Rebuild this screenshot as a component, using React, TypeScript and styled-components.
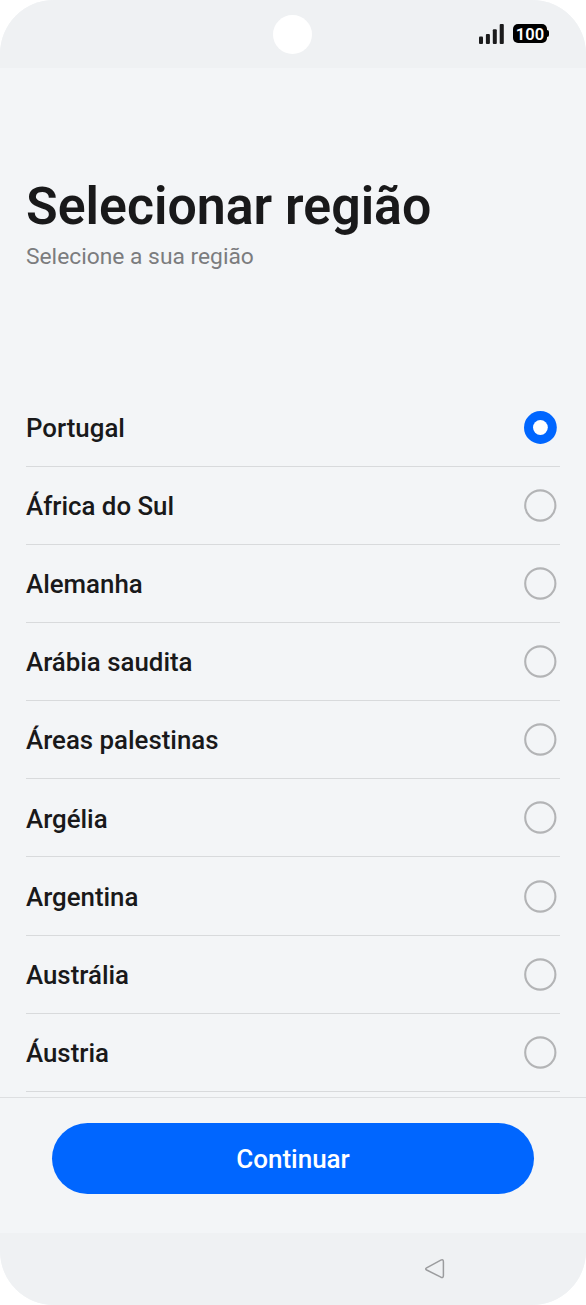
import React, { useState } from "react";
import styled, { createGlobalStyle } from "styled-components";

const GlobalStyle = createGlobalStyle`
  *, *::before, *::after { box-sizing: border-box; }
  body { margin: 0; background: #ffffff; font-family: Roboto, "Liberation Sans", sans-serif; }
`;

const Phone = styled.main`
  display: flex;
  flex-direction: column;
  width: 586px;
  height: 1305px;
  border-radius: 54px;
  overflow: hidden;
  background: #f3f5f7;
  color: #19191a;
`;

const StatusBar = styled.header`
  display: grid;
  grid-template-columns: 1fr 40px 1fr;
  align-items: center;
  flex: none;
  height: 68px;
  padding: 0 37px 0 36px;
  background: #eff1f3;
`;

const Camera = styled.span`
  grid-column: 2;
  width: 39px;
  height: 39px;
  border-radius: 50%;
  background: #ffffff;
`;

const StatusIcons = styled.div`
  display: flex;
  align-items: center;
  justify-content: flex-end;
  gap: 9px;
  padding-bottom: 1px;
`;

const SignalIcon = styled.svg`
  display: block;
  width: 25px;
  height: 20px;
  fill: #1b1b1c;
`;

const Battery = styled.div`
  display: flex;
  align-items: center;
`;

const BatteryBody = styled.span`
  width: 34px;
  height: 19px;
  border-radius: 5px;
  background: #000000;
  color: #ffffff;
  font-size: 16.5px;
  font-weight: 600;
  line-height: 21px;
  text-align: center;
`;

const BatteryTip = styled.span`
  width: 2px;
  height: 7px;
  border-radius: 0 2px 2px 0;
  background: #000000;
`;

const Heading = styled.section`
  flex: none;
  height: 320.7px;
  padding: 108px 26px 0;
`;

const Title = styled.h1`
  margin: 0;
  font-size: 51.85px;
  font-weight: 600;
  line-height: 62px;
  white-space: nowrap;
`;

const Subtitle = styled.p`
  margin: 4px 0 0;
  color: #7b7c7e;
  font-size: 22.8px;
  line-height: 30px;
`;

const RegionList = styled.div`
  flex: 1;
  min-height: 0;
  padding: 0 26px;
  overflow: hidden;
`;

const RegionRow = styled.button`
  display: flex;
  align-items: center;
  justify-content: space-between;
  width: 100%;
  height: 78.125px;
  padding: 0 3px 0 0;
  border: 0;
  border-bottom: 1px solid #d8dadc;
  background: none;
  color: inherit;
  font-family: inherit;
  font-size: 25.85px;
  font-weight: 500;
  line-height: 32px;
  text-align: left;
`;

const RegionName = styled.span`
  padding-top: 1.4px;
`;

const RadioIcon = styled.svg`
  display: block;
  width: 33px;
  height: 33px;
`;

const Footer = styled.footer`
  flex: none;
  height: 136px;
  padding: 25px 52px 0;
  border-top: 1px solid #dddfe1;
`;

const ContinueButton = styled.button`
  display: block;
  width: 100%;
  height: 71px;
  padding: 0;
  border: 0;
  border-radius: 36px;
  background: #0066ff;
  color: #ffffff;
  font-family: inherit;
  font-size: 26px;
  font-weight: 500;
  line-height: 73px;
`;

const NavBar = styled.nav`
  display: flex;
  flex: none;
  align-items: center;
  justify-content: flex-end;
  height: 72px;
  padding-right: 140px;
  background: #eff1f3;
`;

const BackIcon = styled.svg`
  display: block;
  width: 22px;
  height: 22px;
  fill: none;
  stroke: #9b9c9e;
  stroke-width: 1.5;
  stroke-linejoin: round;
`;

const regions = [
  "Portugal",
  "África do Sul",
  "Alemanha",
  "Arábia saudita",
  "Áreas palestinas",
  "Argélia",
  "Argentina",
  "Austrália",
  "Áustria",
];

function Radio({ checked }: { checked: boolean }) {
  return (
    <RadioIcon viewBox="0 0 33 33">
      {checked ? (
        <>
          <circle cx="16.4" cy="16.5" r="16.4" fill="#0066ff" />
          <circle cx="16.4" cy="16.5" r="7.4" fill="#ffffff" />
        </>
      ) : (
        <circle cx="16.3" cy="16.5" r="15.1" fill="none" stroke="#b3b4b6" strokeWidth="2.1" />
      )}
    </RadioIcon>
  );
}

export default function App() {
  const [selected, setSelected] = useState("Portugal");

  return (
    <>
      <GlobalStyle />
      <Phone>
        <StatusBar>
          <Camera />
          <StatusIcons>
            <SignalIcon viewBox="0 0 25 20">
              <rect x="0" y="12.4" width="4" height="7.6" rx="1" />
              <rect x="6.9" y="10" width="4" height="10" rx="1" />
              <rect x="13.8" y="5.2" width="4" height="14.8" rx="1" />
              <rect x="20.7" y="0" width="4.1" height="20" rx="1" />
            </SignalIcon>
            <Battery>
              <BatteryBody>100</BatteryBody>
              <BatteryTip />
            </Battery>
          </StatusIcons>
        </StatusBar>
        <Heading>
          <Title>Selecionar região</Title>
          <Subtitle>Selecione a sua região</Subtitle>
        </Heading>
        <RegionList role="radiogroup">
          {regions.map((name) => (
            <RegionRow
              key={name}
              role="radio"
              aria-checked={name === selected}
              onClick={() => setSelected(name)}
            >
              <RegionName>{name}</RegionName>
              <Radio checked={name === selected} />
            </RegionRow>
          ))}
        </RegionList>
        <Footer>
          <ContinueButton>Continuar</ContinueButton>
        </Footer>
        <NavBar>
          <BackIcon viewBox="0 0 22 22">
            <path d="M2.6 9.8 L16.8 2.1 Q19.4 1 19.4 3.8 V17.6 Q19.4 20.3 16.9 19.2 L2.7 12 Q0.8 10.8 2.6 9.8 Z" />
          </BackIcon>
        </NavBar>
      </Phone>
    </>
  );
}
